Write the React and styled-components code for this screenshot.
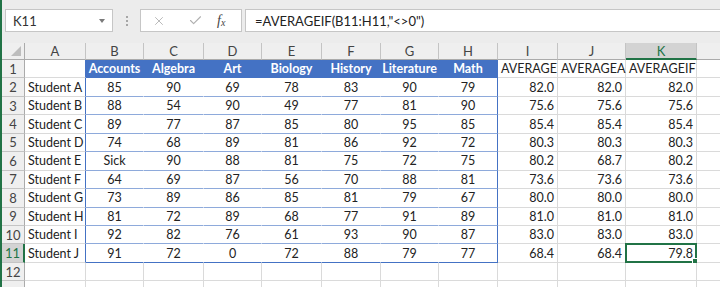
import React from 'react'
import styled, { createGlobalStyle, css } from 'styled-components'
import { X, Check } from 'lucide-react'

const GlobalStyle = createGlobalStyle`
  html, body {
    margin: 0;
    padding: 0;
    background: #fff;
    overflow: hidden;
  }
  * {
    box-sizing: border-box;
  }
`

const GREEN = '#217346'
const BLUE = '#4472c4'
const BLUE_LINE = '#8eaadb'
const GRID = '#dadada'
const HEAD_LINE = '#c4c4c4'

const Window = styled.div`
  width: 720px;
  height: 287px;
  overflow: hidden;
  border-left: 2px solid ${GREEN};
  font-family: Lato, "Liberation Sans", sans-serif;
  color: #222;
`

const FormulaBar = styled.div`
  height: 43px;
  background: #ececec;
  display: flex;
  align-items: flex-start;
  padding: 9px 0 0 3px;
`

const Box = styled.div`
  height: 23px;
  background: #fff;
  border: 1px solid #c6c6c6;
  display: flex;
  align-items: center;
`

const NameBox = styled(Box)`
  width: 108px;
  justify-content: space-between;
  padding: 0 7px 0 7px;
  font-size: 13px;
  color: #333;
`

const Arrow = styled.span`
  width: 0;
  height: 0;
  border-left: 3.5px solid transparent;
  border-right: 3.5px solid transparent;
  border-top: 4px solid #7a7a7a;
`

const Grip = styled.div`
  width: 2px;
  height: 23px;
  margin: 0 12px 0 13px;
  display: flex;
  flex-direction: column;
  justify-content: center;
  gap: 2px;
  span {
    width: 2px;
    height: 2px;
    background: #a6a6a6;
  }
`

const FuncBox = styled(Box)`
  width: 102px;
  padding-left: 11px;
`

const FuncIcon = styled.span`
  width: ${p => p.$w}px;
  display: flex;
  justify-content: center;
  color: #b0b0b0;
`

const Fx = styled.span`
  font-family: "Liberation Serif", serif;
  font-style: italic;
  font-size: 14px;
  color: #444;
  sub {
    font-size: 10px;
    vertical-align: -1px;
  }
`

const Formula = styled(Box)`
  flex: 1;
  margin-left: 3px;
  border-right: none;
  padding-left: 9px;
  font-size: 13px;
  color: #222;
`

const Sheet = styled.div`
  display: grid;
  grid-template-columns: 23px 61px 58px 60px 58px 60px 59px 58px 59px 60px 68px 71px 64px;
  grid-template-rows: 17px repeat(13, 18.45px);
  font-size: 12.5px;
`

const headBase = css`
  background: #efefef;
  color: #444;
  font-size: 13px;
  display: flex;
  align-items: center;
  justify-content: center;
`

const ColHead = styled.div`
  ${headBase}
  border-right: 1px solid ${HEAD_LINE};
  border-bottom: 1px solid #ababab;
  ${p => p.$active && css`
    background: #d3d3d3;
    color: ${GREEN};
    border-bottom: 2px solid ${GREEN};
  `}
`

const Corner = styled.div`
  ${headBase}
  justify-content: flex-end;
  align-items: flex-end;
  padding: 0 3px 3px 0;
  border-right: 1px solid #ababab;
  border-bottom: 1px solid #ababab;
`

const RowHead = styled.div`
  ${headBase}
  border-right: 1px solid #ababab;
  border-bottom: 1px solid ${HEAD_LINE};
  ${p => p.$active && css`
    background: #d3d3d3;
    color: ${GREEN};
    border-right: 2px solid ${GREEN};
  `}
`

const Cell = styled.div`
  position: relative;
  display: flex;
  align-items: center;
  justify-content: ${p => p.$align === 'left' ? 'flex-start' : p.$align === 'right' ? 'flex-end' : 'center'};
  padding: 0 3px;
  white-space: nowrap;
  background: ${p => p.$fill || '#fff'};
  color: ${p => p.$fill ? '#fff' : '#222'};
  font-weight: ${p => p.$bold ? 700 : 400};
  border-right: 1px solid ${p => p.$right || GRID};
  border-bottom: 1px solid ${p => p.$bottom || GRID};
`

const Selection = styled.div`
  position: absolute;
  left: -1px;
  top: -1px;
  right: -1px;
  bottom: -1px;
  border: 2px solid ${GREEN};
  pointer-events: none;
  &::after {
    content: '';
    position: absolute;
    right: -5px;
    bottom: -5px;
    width: 6px;
    height: 6px;
    background: ${GREEN};
    border: 1px solid #fff;
  }
`

const letters = ['A', 'B', 'C', 'D', 'E', 'F', 'G', 'H', 'I', 'J', 'K', '']
const subjects = ['Accounts', 'Algebra', 'Art', 'Biology', 'History', 'Literature', 'Math']

const students = [
  ['Student A', [85, 90, 69, 78, 83, 90, 79], ['82.0', '82.0', '82.0']],
  ['Student B', [88, 54, 90, 49, 77, 81, 90], ['75.6', '75.6', '75.6']],
  ['Student C', [89, 77, 87, 85, 80, 95, 85], ['85.4', '85.4', '85.4']],
  ['Student D', [74, 68, 89, 81, 86, 92, 72], ['80.3', '80.3', '80.3']],
  ['Student E', ['Sick', 90, 88, 81, 75, 72, 75], ['80.2', '68.7', '80.2']],
  ['Student F', [64, 69, 87, 56, 70, 88, 81], ['73.6', '73.6', '73.6']],
  ['Student G', [73, 89, 86, 85, 81, 79, 67], ['80.0', '80.0', '80.0']],
  ['Student H', [81, 72, 89, 68, 77, 91, 89], ['81.0', '81.0', '81.0']],
  ['Student I', [92, 82, 76, 61, 93, 90, 87], ['83.0', '83.0', '83.0']],
  ['Student J', [91, 72, 0, 72, 88, 79, 77], ['68.4', '68.4', '79.8']],
]

const CornerMark = () => (
  <svg width="10" height="10" viewBox="0 0 10 10">
    <polygon points="10,0 10,10 0,10" fill="#bdbdbd" />
  </svg>
)

const HeaderRow = () => (
  <>
    <RowHead>1</RowHead>
    <Cell $align="left" $right={BLUE} />
    {subjects.map(s => (
      <Cell key={s} $fill={BLUE} $bold $right={BLUE} $bottom={BLUE}>{s}</Cell>
    ))}
    <Cell $align="left">AVERAGE</Cell>
    <Cell $align="left">AVERAGEA</Cell>
    <Cell $align="left">AVERAGEIF</Cell>
    <Cell />
  </>
)

const StudentRow = ({ row, name, scores, avgs, last }) => (
  <>
    <RowHead $active={last}>{row}</RowHead>
    <Cell $align="left" $right={BLUE}>{name}</Cell>
    {scores.map((v, i) => (
      <Cell
        key={i}
        $right={i === 6 ? BLUE : '#fff'}
        $bottom={last ? BLUE : BLUE_LINE}
      >{v}</Cell>
    ))}
    {avgs.map((v, i) => (
      <Cell key={i} $align="right">
        {v}
        {last && i === 2 && <Selection />}
      </Cell>
    ))}
    <Cell />
  </>
)

const EmptyRow = ({ row }) => (
  <>
    <RowHead>{row}</RowHead>
    {letters.map((l, i) => <Cell key={i} />)}
  </>
)

export default function App() {
  return (
    <>
      <GlobalStyle />
      <Window>
        <FormulaBar>
          <NameBox>
            <span>K11</span>
            <Arrow />
          </NameBox>
          <Grip><span /><span /><span /></Grip>
          <FuncBox>
            <FuncIcon $w={14}><X size={14} strokeWidth={1.5} /></FuncIcon>
            <FuncIcon $w={21} />
            <FuncIcon $w={16}><Check size={15} strokeWidth={1.8} /></FuncIcon>
            <FuncIcon $w={14} />
            <Fx>f<sub>x</sub></Fx>
          </FuncBox>
          <Formula>=AVERAGEIF(B11:H11,"&lt;&gt;0")</Formula>
        </FormulaBar>
        <Sheet>
          <Corner><CornerMark /></Corner>
          {letters.map((l, i) => <ColHead key={i} $active={l === 'K'}>{l}</ColHead>)}
          <HeaderRow />
          {students.map(([name, scores, avgs], i) => (
            <StudentRow key={name} row={i + 2} name={name} scores={scores} avgs={avgs} last={i === 9} />
          ))}
          <EmptyRow row={12} />
          <EmptyRow row="" />
        </Sheet>
      </Window>
    </>
  )
}
